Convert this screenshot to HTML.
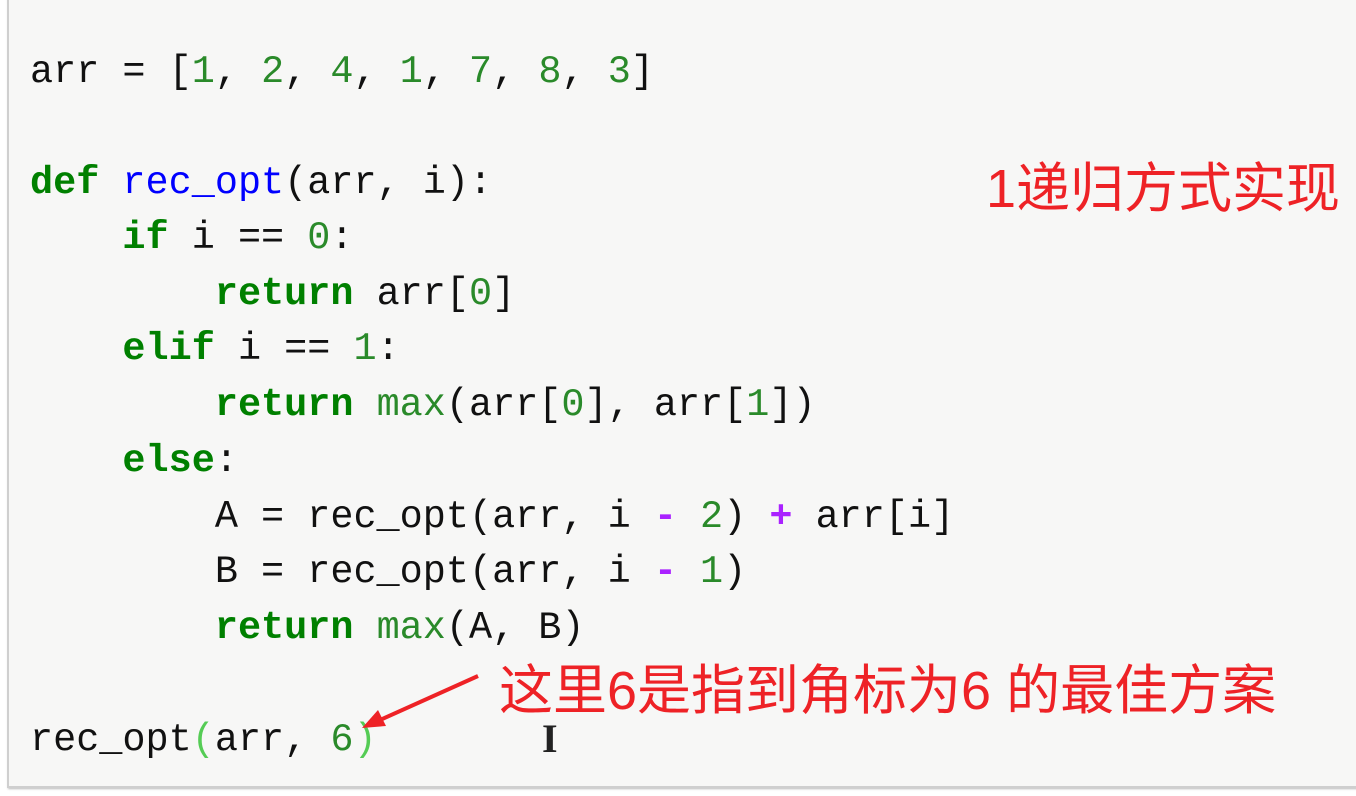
<!DOCTYPE html>
<html><head><meta charset="utf-8"><style>
html,body{margin:0;padding:0;background:#fff;width:1356px;height:796px;overflow:hidden;position:relative}
.cell{position:absolute;left:7px;top:-4px;width:1360px;height:788px;background:#f7f7f6;border:2px solid #cfcfcf;box-shadow:1px 1px 2px #bbb}
.l{position:absolute;left:30px;font-family:"Liberation Mono",monospace;font-size:38.5px;color:#111;white-space:pre;line-height:56px}
.k{color:#008000;font-weight:bold}.f{color:#0000ff}.n{color:#2a8a2a}.o{color:#aa22ff;font-weight:bold}
.r{position:absolute;font-family:"Liberation Sans","Noto Sans CJK SC",sans-serif;color:#ee2226;font-size:54px;white-space:nowrap;line-height:60px}
</style></head><body>
<div class="cell"></div>
<div class="l" style="top:44px">arr = [<span class="n">1</span>, <span class="n">2</span>, <span class="n">4</span>, <span class="n">1</span>, <span class="n">7</span>, <span class="n">8</span>, <span class="n">3</span>]</div>
<div class="l" style="top:155px"><span class="k">def</span> <span class="f">rec_opt</span>(arr, i):</div>
<div class="l" style="top:210px">    <span class="k">if</span> i == <span class="n">0</span>:</div>
<div class="l" style="top:266px">        <span class="k">return</span> arr[<span class="n">0</span>]</div>
<div class="l" style="top:321px">    <span class="k">elif</span> i == <span class="n">1</span>:</div>
<div class="l" style="top:377px">        <span class="k">return</span> <span class="n">max</span>(arr[<span class="n">0</span>], arr[<span class="n">1</span>])</div>
<div class="l" style="top:433px">    <span class="k">else</span>:</div>
<div class="l" style="top:489px">        A = rec_opt(arr, i <span class="o">-</span> <span class="n">2</span>) <span class="o">+</span> arr[i]</div>
<div class="l" style="top:544px">        B = rec_opt(arr, i <span class="o">-</span> <span class="n">1</span>)</div>
<div class="l" style="top:600px">        <span class="k">return</span> <span class="n">max</span>(A, B)</div>
<div class="l" style="top:712px">rec_opt<span style="color:#5c5">(</span>arr, <span class="n">6</span><span style="color:#5c5">)</span></div>
<div class="r" style="left:986px;top:159px">1递归方式实现</div>
<div class="r" style="left:499px;top:661px">这里6是指到角标为6 的最佳方案</div>
<svg style="position:absolute;left:0;top:0" width="1356" height="796">
<line x1="478" y1="676" x2="380" y2="720" stroke="#ee2226" stroke-width="4"/>
<polygon points="362,728 378,710 386,726" fill="#ee2226"/>
<text x="542" y="752" font-family="Liberation Serif" font-weight="bold" font-size="40" fill="#222">I</text>
</svg>
</body></html>
